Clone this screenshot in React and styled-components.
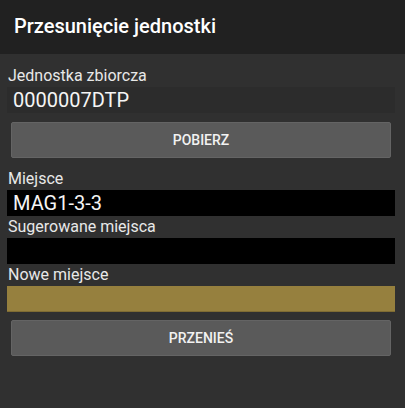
import React from 'react'
import styled, { createGlobalStyle } from 'styled-components'

const GlobalStyle = createGlobalStyle`
  html, body {
    margin: 0;
    padding: 0;
    background: #303030;
  }
  * {
    box-sizing: border-box;
  }
`

const Screen = styled.div`
  width: 405px;
  height: 408px;
  background: #303030;
  font-family: Roboto, 'Noto Sans', sans-serif;
  color: #f2f2f2;
  overflow: hidden;
`

const Toolbar = styled.div`
  height: 54px;
  background: #212121;
  display: flex;
  align-items: center;
  padding: 0 14px 2px;
  font-size: 20px;
  font-weight: 500;
  color: #ffffff;
`

const Content = styled.div`
  display: flex;
  flex-direction: column;
  padding: 11px 10px 0 7px;
`

const Label = styled.div`
  height: 22px;
  line-height: 22px;
  font-size: 16px;
  padding-left: 1px;
  color: #e8e8e8;
  margin-top: ${props => props.first ? '0' : '0'};
`

const Field = styled.div`
  height: 26px;
  line-height: 26px;
  font-size: 20px;
  padding-left: 6px;
  color: #f5f5f5;
  background: ${props => props.bg};
  border-bottom: 1px solid ${props => props.edge || props.bg};
`

const Button = styled.button`
  margin: ${props => props.gap} 4px 0;
  height: 36px;
  background: #5a5a5a;
  border: 1px solid #646464;
  border-radius: 2px;
  color: #f2f2f2;
  font-family: Roboto, 'Noto Sans', sans-serif;
  font-size: 14px;
  font-weight: 500;
  padding: 0;
  margin-bottom: ${props => props.after || '0'};
`

export default function App() {
  return (
    <Screen>
      <GlobalStyle />
      <Toolbar>Przesunięcie jednostki</Toolbar>
      <Content>
        <Label>Jednostka zbiorcza</Label>
        <Field bg="#2c2c2c">0000007DTP</Field>
        <Button gap="9px" after="10px">POBIERZ</Button>
        <Label>Miejsce</Label>
        <Field bg="#000000">MAG1-3-3</Field>
        <Label>Sugerowane miejsca</Label>
        <Field bg="#000000"></Field>
        <Label>Nowe miejsce</Label>
        <Field bg="#96803e" edge="#7f6c33"></Field>
        <Button gap="8px">PRZENIEŚ</Button>
      </Content>
    </Screen>
  )
}
